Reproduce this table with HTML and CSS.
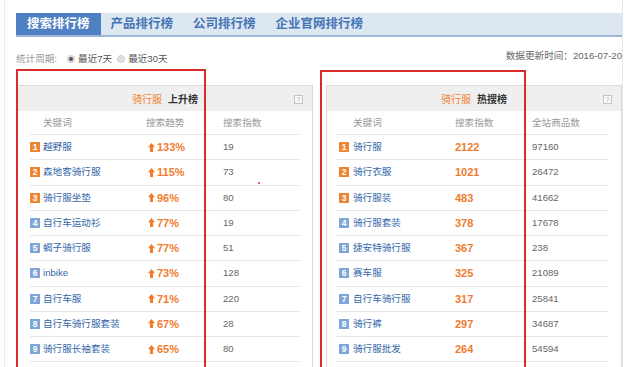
FILE: index.html
```html
<!DOCTYPE html>
<html lang="zh-CN">
<head>
<meta charset="utf-8">
<title>搜索排行榜</title>
<link rel="stylesheet" href="styles.css">
</head>
<body>
<div class="page">
  <div class="tabs">
    <span class="tab active">搜索排行榜</span>
    <span class="tab">产品排行榜</span>
    <span class="tab">公司排行榜</span>
    <span class="tab">企业官网排行榜</span>
  </div>
  <div class="filter">
    <div class="period">
      <span class="label">统计周期:</span>
      <span class="radio on"></span><span class="opt">最近7天</span>
      <span class="radio"></span><span class="opt">最近30天</span>
    </div>
    <div class="updated">数据更新时间：2016-07-20</div>
  </div>
  <div class="panels">
    <div class="panel left">
      <div class="phead"><span class="cat">骑行服</span><span class="ptitle">上升榜</span><span class="help">?</span></div>
      <div class="list">
        <div class="row colh"><span class="c1">关键词</span><span>搜索趋势</span><span>搜索指数</span></div>
        <div class="row"><span class="kw"><i class="rank hot">1</i>越野服</span><span class="trend"><svg class="up" viewBox="0 0 7 9"><polygon points="3.5,0 7,4.2 5,4.2 5,9 2,9 2,4.2 0,4.2"/></svg>133%</span><span class="num">19</span></div>
        <div class="row"><span class="kw"><i class="rank hot">2</i>森地客骑行服</span><span class="trend"><svg class="up" viewBox="0 0 7 9"><polygon points="3.5,0 7,4.2 5,4.2 5,9 2,9 2,4.2 0,4.2"/></svg>115%</span><span class="num">73</span></div>
        <div class="row"><span class="kw"><i class="rank hot">3</i>骑行服坐垫</span><span class="trend"><svg class="up" viewBox="0 0 7 9"><polygon points="3.5,0 7,4.2 5,4.2 5,9 2,9 2,4.2 0,4.2"/></svg>96%</span><span class="num">80</span></div>
        <div class="row"><span class="kw"><i class="rank">4</i>自行车运动衫</span><span class="trend"><svg class="up" viewBox="0 0 7 9"><polygon points="3.5,0 7,4.2 5,4.2 5,9 2,9 2,4.2 0,4.2"/></svg>77%</span><span class="num">19</span></div>
        <div class="row"><span class="kw"><i class="rank">5</i>蝎子骑行服</span><span class="trend"><svg class="up" viewBox="0 0 7 9"><polygon points="3.5,0 7,4.2 5,4.2 5,9 2,9 2,4.2 0,4.2"/></svg>77%</span><span class="num">51</span></div>
        <div class="row"><span class="kw"><i class="rank">6</i>inbike</span><span class="trend"><svg class="up" viewBox="0 0 7 9"><polygon points="3.5,0 7,4.2 5,4.2 5,9 2,9 2,4.2 0,4.2"/></svg>73%</span><span class="num">128</span></div>
        <div class="row"><span class="kw"><i class="rank">7</i>自行车服</span><span class="trend"><svg class="up" viewBox="0 0 7 9"><polygon points="3.5,0 7,4.2 5,4.2 5,9 2,9 2,4.2 0,4.2"/></svg>71%</span><span class="num">220</span></div>
        <div class="row"><span class="kw"><i class="rank">8</i>自行车骑行服套装</span><span class="trend"><svg class="up" viewBox="0 0 7 9"><polygon points="3.5,0 7,4.2 5,4.2 5,9 2,9 2,4.2 0,4.2"/></svg>67%</span><span class="num">28</span></div>
        <div class="row"><span class="kw"><i class="rank">9</i>骑行服长袖套装</span><span class="trend"><svg class="up" viewBox="0 0 7 9"><polygon points="3.5,0 7,4.2 5,4.2 5,9 2,9 2,4.2 0,4.2"/></svg>65%</span><span class="num">80</span></div>
      </div>
    </div>
    <div class="panel right">
      <div class="phead"><span class="cat">骑行服</span><span class="ptitle">热搜榜</span><span class="help">?</span></div>
      <div class="list">
        <div class="row colh"><span class="c1">关键词</span><span>搜索指数</span><span>全站商品数</span></div>
        <div class="row"><span class="kw"><i class="rank hot">1</i>骑行服</span><span class="hotnum">2122</span><span class="num">97160</span></div>
        <div class="row"><span class="kw"><i class="rank hot">2</i>骑行衣服</span><span class="hotnum">1021</span><span class="num">26472</span></div>
        <div class="row"><span class="kw"><i class="rank hot">3</i>骑行服装</span><span class="hotnum">483</span><span class="num">41662</span></div>
        <div class="row"><span class="kw"><i class="rank">4</i>骑行服套装</span><span class="hotnum">378</span><span class="num">17678</span></div>
        <div class="row"><span class="kw"><i class="rank">5</i>捷安特骑行服</span><span class="hotnum">367</span><span class="num">238</span></div>
        <div class="row"><span class="kw"><i class="rank">6</i>赛车服</span><span class="hotnum">325</span><span class="num">21089</span></div>
        <div class="row"><span class="kw"><i class="rank">7</i>自行车骑行服</span><span class="hotnum">317</span><span class="num">25841</span></div>
        <div class="row"><span class="kw"><i class="rank">8</i>骑行裤</span><span class="hotnum">297</span><span class="num">34687</span></div>
        <div class="row"><span class="kw"><i class="rank">9</i>骑行服批发</span><span class="hotnum">264</span><span class="num">54594</span></div>
      </div>
    </div>
  </div>
  <div class="mark mark-left"></div>
  <div class="mark mark-right"></div>
  <div class="dot"></div>
</div>
</body>
</html>
```
FILE: styles.css
```css
html, body {
  margin: 0;
  padding: 0;
  background: #fff;
}
body {
  font-family: "Liberation Sans", "Noto Sans CJK SC", sans-serif;
  font-size: 9.6px;
  color: #666;
  overflow: hidden;
}
.page {
  position: relative;
  overflow: hidden;
  margin-left: 4px;
  width: 606px;
  height: 354px;
  box-sizing: content-box;
  padding: 13px 0 0 11px;
  border-left: 1px solid #ececec;
  border-right: 1px solid #e6e6e6;
}
.tabs {
  display: flex;
  height: 22px;
  background: #dde7f2;
  border-bottom: 2px solid #9cb6d8;
}
.tab {
  padding: 0 10px;
  line-height: 22px;
  font-size: 12.5px;
  font-weight: bold;
  color: #4474b6;
}
.tab.active {
  background: #4f80c3;
  color: #fff;
  padding: 0 11px;
}
.filter {
  display: flex;
  justify-content: space-between;
  height: 18px;
  margin-top: 10px;
  margin-bottom: 20px;
}
.period {
  display: flex;
  align-items: center;
  align-self: flex-end;
  height: 12px;
  line-height: 12px;
}
.label {
  color: #999;
  margin-right: 8px;
}
.radio {
  width: 8px;
  height: 8px;
  box-sizing: border-box;
  border-radius: 50%;
  background: #e0e0e0;
  border: 1px solid #cfcfcf;
  margin-right: 3px;
  margin-left: 2px;
}
.radio.on {
  background: #555;
  border: 2px solid #d6d6d6;
}
.opt {
  color: #555;
  margin-right: 3px;
}
.updated {
  align-self: flex-start;
  margin-top: 3px;
  line-height: 12px;
  color: #666;
}
.panels {
  display: flex;
  gap: 13px;
  margin-left: 1px;
}
.panel {
  width: 296px;
  box-sizing: border-box;
  border: 1px solid #d9d9d9;
  border-bottom: none;
  height: 300px;
}
.phead {
  position: relative;
  height: 25px;
  background: #efefef;
  display: flex;
  align-items: center;
  justify-content: center;
  font-size: 10px;
}
.cat {
  color: #ef8536;
  margin-right: 6px;
}
.ptitle {
  color: #333;
  font-weight: bold;
}
.help {
  position: absolute;
  right: 9px;
  top: 9px;
  width: 9px;
  height: 9px;
  box-sizing: border-box;
  border: 1px solid #c4c4c4;
  background: #fafafa;
  color: #aaa;
  font-size: 7px;
  line-height: 7px;
  text-align: center;
}
.left .list {
  margin: 0 12px 0 12px;
}
.right .list {
  margin: 0 13px 0 10px;
}
.row {
  display: grid;
  align-items: center;
  height: 24.25px;
  border-bottom: 1px solid #e6e6e6;
  line-height: 12px;
}
.left .row {
  grid-template-columns: 116px 77px 1fr;
}
.right .row {
  grid-template-columns: 118px 77px 1fr;
}
.row.colh {
  height: 23px;
  color: #999;
}
.left .colh .c1 {
  padding-left: 13px;
}
.right .colh .c1 {
  padding-left: 16px;
}
.kw {
  display: flex;
  align-items: center;
  color: #3567a8;
}
.right .kw {
  padding-left: 2px;
}
.rank {
  width: 10px;
  height: 10px;
  margin-right: 3px;
  background: #7ea6d8;
  color: #fff;
  font-style: normal;
  font-weight: bold;
  font-size: 8.5px;
  line-height: 10px;
  text-align: center;
}
.right .rank {
  margin-right: 4px;
}
.rank.hot {
  background: #ee8631;
}
.trend {
  display: flex;
  align-items: center;
  padding-left: 2px;
  color: #f07b2c;
  font-weight: bold;
  font-size: 11px;
}
.up {
  width: 7px;
  height: 9px;
  margin-right: 2px;
  fill: #f07b2c;
}
.hotnum {
  color: #ef7b2e;
  font-weight: bold;
  font-size: 11px;
}
.num {
  color: #666;
}
.mark {
  position: absolute;
  border: 2px solid #d92b2b;
  box-sizing: border-box;
  height: 320px;
}
.mark-left {
  left: 11px;
  top: 69px;
  width: 190px;
}
.mark-right {
  left: 315px;
  top: 70px;
  width: 206px;
}
.dot {
  position: absolute;
  left: 253px;
  top: 182px;
  width: 2px;
  height: 2px;
  background: #e46a6a;
}
```
